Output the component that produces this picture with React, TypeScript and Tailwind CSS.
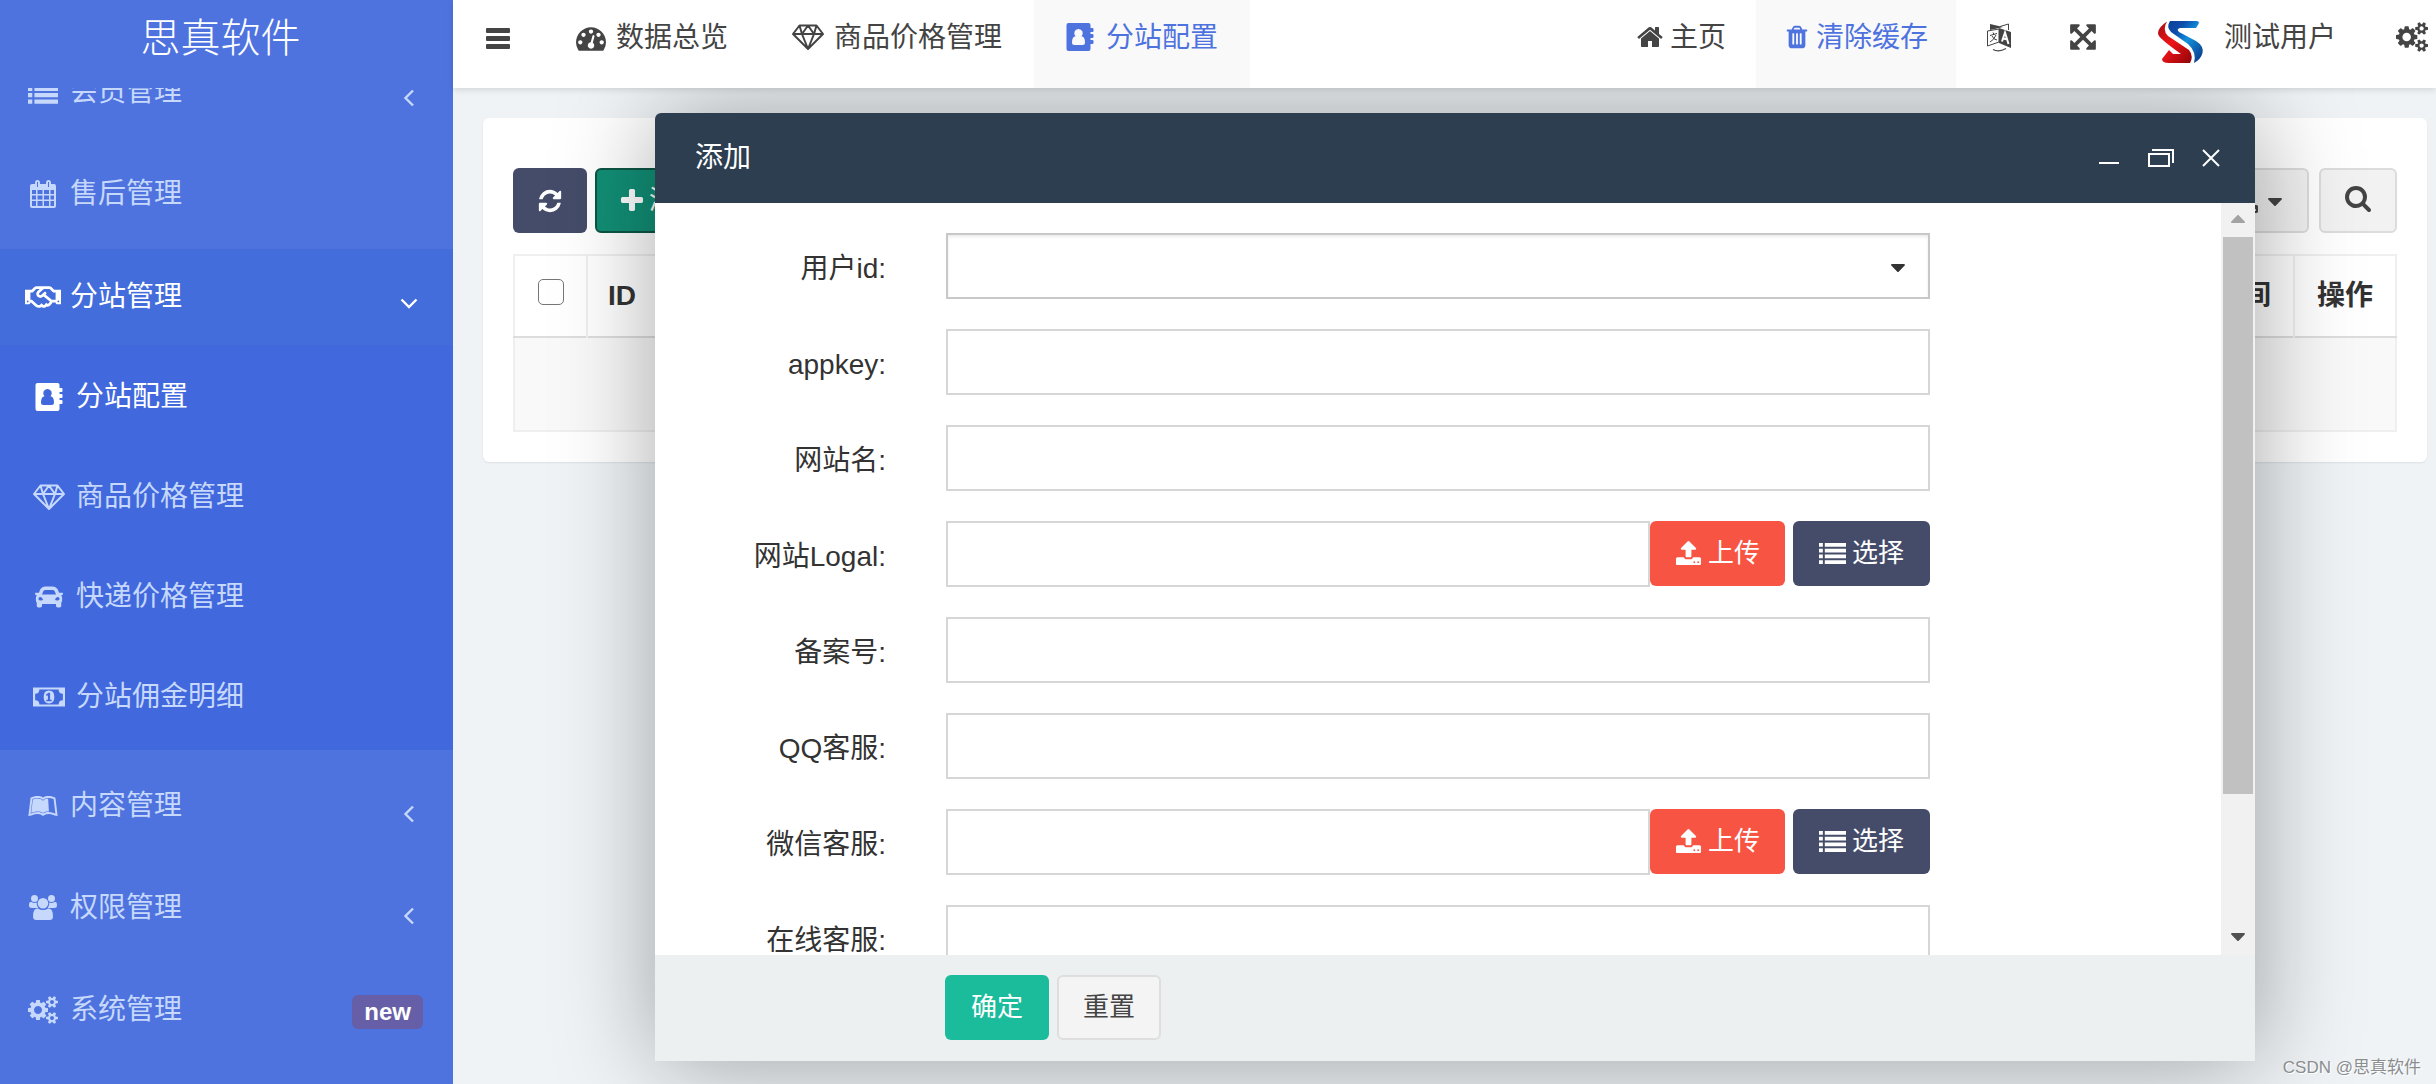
import React from 'react';
import { FaCar, FaCaretDown, FaLeanpub, FaRegHandshake } from 'react-icons/fa';

type IconProps = { className?: string };

const glyph = (d: string, viewBox = '0 0 1792 1792') => {
  const Glyph: React.FC<IconProps> = ({ className }) => (
    <svg viewBox={viewBox} className={className} fill="currentColor" fillRule="evenodd" aria-hidden="true">
      <path d={d} />
    </svg>
  );
  return Glyph;
};

const Tachometer = glyph('M384 1152q0-53-37.5-90.5t-90.5-37.5-90.5 37.5-37.5 90.5 37.5 90.5 90.5 37.5 90.5-37.5 37.5-90.5zm192-448q0-53-37.5-90.5t-90.5-37.5-90.5 37.5-37.5 90.5 37.5 90.5 90.5 37.5 90.5-37.5 37.5-90.5zm428 481l101-382q6-26-7.5-48.5t-38.5-29.5-48 6.5-30 39.5l-101 382q-60 5-107 43.5t-63 98.5q-20 77 20 146t117 89 146-20 89-117q16-60-6-117t-72-91zm660-33q0-53-37.5-90.5t-90.5-37.5-90.5 37.5-37.5 90.5 37.5 90.5 90.5 37.5 90.5-37.5 37.5-90.5zm-640-640q0-53-37.5-90.5t-90.5-37.5-90.5 37.5-37.5 90.5 37.5 90.5 90.5 37.5 90.5-37.5 37.5-90.5zm448 192q0-53-37.5-90.5t-90.5-37.5-90.5 37.5-37.5 90.5 37.5 90.5 90.5 37.5 90.5-37.5 37.5-90.5zm320 448q0 261-141 483-19 29-54 29h-1402q-35 0-54-29-141-221-141-483 0-182 71-348t191-286 286-191 348-71 348 71 286 191 191 286 71 348z');
const Home = glyph('M1472 992v480q0 26-19 45t-45 19h-384v-384h-256v384h-384q-26 0-45-19t-19-45v-480q0-1 .5-3t.5-3l575-474 575 474q1 2 1 6zm223-69l-62 74q-8 9-21 11h-3q-13 0-21-7l-692-577-692 577q-12 8-24 7-13-2-21-11l-62-74q-8-10-7-23.5t11-21.5l719-599q32-26 76-26t76 26l244 204v-195q0-14 9-23t23-9h192q14 0 23 9t9 23v408l219 182q10 8 11 21.5t-7 23.5z');
const Trash = glyph('M704 1376v-704q0-14-9-23t-23-9h-64q-14 0-23 9t-9 23v704q0 14 9 23t23 9h64q14 0 23-9t9-23zm256 0v-704q0-14-9-23t-23-9h-64q-14 0-23 9t-9 23v704q0 14 9 23t23 9h64q14 0 23-9t9-23zm256 0v-704q0-14-9-23t-23-9h-64q-14 0-23 9t-9 23v704q0 14 9 23t23 9h64q14 0 23-9t9-23zm-544-992h448l-48-117q-7-9-17-11h-317q-10 2-17 11zm928 32v64q0 14-9 23t-23 9h-96v948q0 83-47 143.5t-113 60.5h-832q-66 0-113-58.5t-47-141.5v-952h-96q-14 0-23-9t-9-23v-64q0-14 9-23t23-9h309l70-167q15-37 54-63t79-26h320q40 0 79 26t54 63l70 167h309q14 0 23 9t9 23z');
const Search = glyph('M1216 832q0-185-131.5-316.5t-316.5-131.5-316.5 131.5-131.5 316.5 131.5 316.5 316.5 131.5 316.5-131.5 131.5-316.5zm512 832q0 52-38 90t-90 38q-54 0-90-38l-343-342q-179 124-399 124-143 0-273.5-55.5t-225-150-150-225-55.5-273.5 55.5-273.5 150-225 225-150 273.5-55.5 273.5 55.5 225 150 150 225 55.5 273.5q0 220-124 399l343 343q37 37 37 90z');
const Plus = glyph('M1600 736v192q0 40-28 68t-68 28h-416v416q0 40-28 68t-68 28h-192q-40 0-68-28t-28-68v-416h-416q-40 0-68-28t-28-68v-192q0-40 28-68t68-28h416v-416q0-40 28-68t68-28h192q40 0 68 28t28 68v416h416q40 0 68 28t28 68z', '192 0 1408 1792');
const Refresh = glyph('M1639 1056q0 5-1 7-64 268-268 434.5t-478 166.5q-146 0-282.5-55t-243.5-157l-129 129q-19 19-45 19t-45-19-19-45v-448q0-26 19-45t45-19h448q26 0 45 19t19 45-19 45l-137 137q71 66 161 102t187 36q134 0 250-65t186-179q11-17 53-117 8-23 30-23h192q13 0 22.5 9.5t9.5 22.5zm25-800v448q0 26-19 45t-45 19h-448q-26 0-45-19t-19-45 19-45l138-138q-148-137-349-137-134 0-250 65t-186 179q-11 17-53 117-8 23-30 23h-199q-13 0-22.5-9.5t-9.5-22.5v-7q65-268 270-434.5t480-166.5q146 0 284 55.5t245 156.5l130-129q19-19 45-19t45 19 19 45z');
const Upload = glyph('M1344 1472q0-26-19-45t-45-19-45 19-19 45 19 45 45 19 45-19 19-45zm256 0q0-26-19-45t-45-19-45 19-19 45 19 45 45 19 45-19 19-45zm128-224v320q0 40-28 68t-68 28h-1472q-40 0-68-28t-28-68v-320q0-40 28-68t68-28h427q21 56 70.5 92t110.5 36h256q61 0 110.5-36t70.5-92h427q40 0 68 28t28 68zm-325-648q-17 40-59 40h-256v448q0 26-19 45t-45 19h-256q-26 0-45-19t-19-45v-448h-256q-42 0-59-40-17-39 14-69l448-448q18-19 45-19t45 19l448 448q31 30 14 69z');
const Cogs = glyph('M896 896q0-106-75-181t-181-75-181 75-75 181 75 181 181 75 181-75 75-181zm768 512q0-52-38-90t-90-38-90 38-38 90q0 53 37.5 90.5t90.5 37.5 90.5-37.5 37.5-90.5zm0-1024q0-52-38-90t-90-38-90 38-38 90q0 53 37.5 90.5t90.5 37.5 90.5-37.5 37.5-90.5zm-384 421v185q0 10-7 19.5t-16 10.5l-155 24q-11 35-32 76 34 48 90 115 7 11 7 20 0 12-7 19-23 30-82.5 89.5t-78.5 59.5q-11 0-21-7l-115-90q-37 19-77 31-11 108-23 155-7 24-30 24h-186q-11 0-20-7.5t-10-17.5l-23-153q-34-10-75-31l-118 89q-7 7-20 7-11 0-21-8-144-133-144-160 0-9 7-19 10-14 41-53t47-61q-23-44-35-82l-152-24q-10-1-17-9.5t-7-19.5v-185q0-10 7-19.5t16-10.5l155-24q11-35 32-76-34-48-90-115-7-11-7-20 0-12 7-20 22-30 82-89t79-59q11 0 21 7l115 90q34-18 77-32 11-108 23-154 7-24 30-24h186q11 0 20 7.5t10 17.5l23 153q34 10 75 31l118-89q8-7 20-7 11 0 21 8 144 133 144 160 0 8-7 19-12 16-42 54t-45 60q23 48 34 82l152 23q10 2 17 10.5t7 19.5zm640 533v140q0 16-149 31-12 27-30 52 51 113 51 138 0 4-4 7-122 71-124 71-8 0-46-47t-52-68q-20 2-30 2t-30-2q-14 21-52 68t-46 47q-2 0-124-71-4-3-4-7 0-25 51-138-18-25-30-52-149-15-149-31v-140q0-16 149-31 13-29 30-52-51-113-51-138 0-4 4-7 4-2 35-20t59-34 30-16q8 0 46 46.5t52 67.5q20-2 30-2t30 2q51-71 92-112l6-2q4 0 124 70 4 3 4 7 0 25-51 138 17 23 30 52 149 15 149 31zm0-1024v140q0 16-149 31-12 27-30 52 51 113 51 138 0 4-4 7-122 71-124 71-8 0-46-47t-52-68q-20 2-30 2t-30-2q-14 21-52 68t-46 47q-2 0-124-71-4-3-4-7 0-25 51-138-18-25-30-52-149-15-149-31v-140q0-16 149-31 13-29 30-52-51-113-51-138 0-4 4-7 4-2 35-20t59-34 30-16q8 0 46 46.5t52 67.5q20-2 30-2t30 2q51-71 92-112l6-2q4 0 124 70 4 3 4 7 0 25-51 138 17 23 30 52 149 15 149 31z', '0 0 1920 1792');
const Expand = glyph('M1411 541l-355 355 355 355 144-144q29-31 70-14 39 17 39 59v448q0 26-19 45t-45 19h-448q-42 0-59-40-17-39 14-69l144-144-355-355-355 355 144 144q31 30 14 69-17 40-59 40h-448q-26 0-45-19t-19-45v-448q0-42 40-59 39-17 69 14l144 144 355-355-355-355-144 144q-19 19-45 19-12 0-24-5-40-17-40-59v-448q0-26 19-45t45-19h448q42 0 59 40 17 39-14 69l-144 144 355 355 355-355-144-144q-31-30-14-69 17-40 59-40h448q26 0 45 19t19 45v448q0 42-39 59-13 5-25 5-26 0-45-19z');
const Bars = glyph('M1 2h22q1 0 1 1v3q0 1-1 1h-22q-1 0-1-1v-3q0-1 1-1zM1 10h22q1 0 1 1v3q0 1-1 1h-22q-1 0-1-1v-3q0-1 1-1zM1 18h22q1 0 1 1v3q0 1-1 1h-22q-1 0-1-1v-3q0-1 1-1z', '0 0 24 24');
const List = glyph('M0 2h4v4H0zM0 8h4v4H0zM0 14h4v4H0zM0 20h4v4H0zM6 2h22v4H6zM6 8h22v4H6zM6 14h22v4H6zM6 20h22v4H6z', '0 0 28 26');
const Users = glyph('M5.500 1a3.500 3.500 0 1 1 0 7 3.500 3.500 0 0 1 0-7zM22.500 1a3.500 3.500 0 1 1 0 7 3.500 3.500 0 0 1 0-7zM14 4a5.300 5.300 0 1 1 0 10.600 5.300 5.300 0 0 1 0-10.600zM2.500 8Q4 9 5.500 9q1.200 0 2.200-.4-.3 3.200 1.500 5.400H3q-3 0-3-2.500Q0 8 1.500 8zM25.500 8Q24 9 22.500 9q-1.200 0-2.200-.4.3 3.200-1.500 5.400H25q3 0 3-2.500Q28 8 26.500 8zM9 14.500Q11 16 14 16t5-1.500Q24 14 24 22.500 24 26 20.500 26h-13Q4 26 4 22.500 4 14 9 14.500z', '0 0 28 28');
const Calendar = glyph('M2 4h3V3q0-3 2.500-3T10 3v1h6V3q0-3 2.500-3T21 3v1h3q2 0 2 2v20q0 2-2 2H2q-2 0-2-2V6q0-2 2-2zM2 10v4h4v-4zM7.500 10v4h5v-4zM14 10v4h5v-4zM20.500 10v4H24v-4zM2 15.500v4h4v-4zM7.500 15.500v4h5v-4zM14 15.500v4h5v-4zM20.500 15.500v4H24v-4zM2 21v5h4v-5zM7.500 21v5h5v-5zM14 21v5h5v-5zM20.500 21v5H24v-5zM7 2v5h1V2zM18 2v5h1V2z', '0 0 26 28');
const Money = glyph('M0 3h30v18H0zM6 5Q6 9 2 9v6q4 0 4 4h18q0-4 4-4V9q-4 0-4-4zM15 6q5 0 5 6t-5 6-5-6 5-6zM14.500 8L12 10l1 1 1-.6V14.500h-1.500V16h5v-1.500H16V8z', '0 0 30 24');
const AddressBook = glyph('M2 0h20q2 0 2 2v3h2q1 0 1 1v2q0 1-1 1h-2v2h2q1 0 1 1v2q0 1-1 1h-2v2h2q1 0 1 1v2q0 1-1 1h-2v5q0 2-2 2H2q-2 0-2-2V2q0-2 2-2zM12 6a4.200 4.200 0 0 0-3 7.200q-3.500.5-3.500 6.300 0 2.500 2.500 2.500h8q2.500 0 2.500-2.500 0-5.800-3.500-6.300A4.200 4.200 0 0 0 12 6z', '0 0 27 28');

const Diamond: React.FC<IconProps> = ({ className }) => (
  <svg viewBox="0 0 32 28" className={className} fill="none" stroke="currentColor" strokeWidth="2" strokeLinejoin="round" aria-hidden="true">
    <path d="M7.500 2.500h17L31 11 16 26 1 11zM1 11h30M7.500 2.500L10 11l6 15 6-15 2.500-8.500M10 11l6-8.500L22 11" />
  </svg>
);

const AngleLeft: React.FC<IconProps> = ({ className }) => (
  <svg viewBox="0 0 16 20" className={className} fill="none" stroke="currentColor" strokeWidth="2.400" aria-hidden="true">
    <path d="M12 2.500L4.500 10l7.500 7.500" />
  </svg>
);

const AngleDown: React.FC<IconProps> = ({ className }) => (
  <svg viewBox="0 0 20 16" className={className} fill="none" stroke="currentColor" strokeWidth="2.400" aria-hidden="true">
    <path d="M2.500 4.500L10 12l7.500-7.500" />
  </svg>
);

const Language: React.FC<IconProps> = ({ className }) => (
  <svg viewBox="0 0 26 30" className={className} fill="none" stroke="currentColor" aria-hidden="true">
    <path d="M13 7L1.500 9v15L13 20z" />
    <path d="M14 4.500L22.500 2v6" />
    <path d="M4 2v6l9-2 4-1z" fill="currentColor" stroke="none" />
    <path d="M13 6l12 4v16l-12-5z" fill="currentColor" stroke="none" />
    <path d="M16 19.500l3-9 3.500 11.500M17 16.500l4.500 1" stroke="#fff" strokeWidth="2" />
    <path d="M4 13.500l7-2M7 10.500l1 2M10 13q-2 5-6 7M6 14q2 4 5 4" />
    <path d="M7 27.500q6 3 13-1" strokeWidth="1.200" />
  </svg>
);

const UserLogo: React.FC<IconProps> = ({ className }) => (
  <svg viewBox="0 0 46 44" className={className} aria-hidden="true">
    <defs>
      <linearGradient id="ribbonBlue" x1="0" y1="0" x2="1" y2="1">
        <stop offset="0" stopColor="#0b3f97" />
        <stop offset=".25" stopColor="#0d4dab" />
        <stop offset=".5" stopColor="#1290dc" />
        <stop offset="1" stopColor="#0a2f80" />
      </linearGradient>
      <linearGradient id="ribbonRed" x1="0" y1="0" x2="1" y2="1">
        <stop offset="0" stopColor="#a50d12" />
        <stop offset=".45" stopColor="#ee1418" />
        <stop offset="1" stopColor="#8e0509" />
      </linearGradient>
    </defs>
    <path d="M12 1h26q4 0 2.500 3L38 8H22q-4 1-1 4l17 9q8 5 6.500 12Q43 39 36 43q3-11-6-19L13 12Q8 7 12 1z" fill="url(#ribbonBlue)" />
    <path d="M9 1.500Q-2 9 .500 15 2 19 23 34h-8l-4-4-7 9q0 4 7 4h21q4-7-1-13L10 16Q4 10 9 1.500z" fill="url(#ribbonRed)" />
  </svg>
);

const subItems = [
  { label: '分站配置', Icon: AddressBook, active: true },
  { label: '商品价格管理', Icon: Diamond },
  { label: '快递价格管理', Icon: FaCar },
  { label: '分站佣金明细', Icon: Money },
];

const fields = [
  { id: 'user_id', label: '用户id:', kind: 'select' },
  { id: 'appkey', label: 'appkey:', kind: 'text' },
  { id: 'site_name', label: '网站名:', kind: 'text' },
  { id: 'site_logo', label: '网站Logal:', kind: 'upload' },
  { id: 'icp', label: '备案号:', kind: 'text' },
  { id: 'qq', label: 'QQ客服:', kind: 'text' },
  { id: 'wechat', label: '微信客服:', kind: 'upload' },
  { id: 'online', label: '在线客服:', kind: 'text' },
];

type MenuRowProps = {
  label: string;
  Icon: React.ComponentType<IconProps>;
  active?: boolean;
  children?: React.ReactNode;
};

const MenuRow: React.FC<MenuRowProps> = ({ label, Icon, active, children }) => (
  <a
    href="#"
    className={`flex h-24 items-center pl-6 pr-[30px] ${active ? 'bg-[#446ddc] text-white' : 'text-[#c6d8fb]'}`}
  >
    <span className="flex w-[38px] justify-center">
      <Icon className={active ? 'h-8 w-9' : 'h-7 w-[30px]'} />
    </span>
    <span className="ml-2 flex-1">{label}</span>
    {children}
  </a>
);

const Sidebar: React.FC = () => (
  <aside className="flex w-[453px] shrink-0 flex-col bg-[#4e73df] text-[28px]">
    <div className="flex h-[88px] shrink-0 justify-center pt-2 pr-3 text-[40px] leading-[60px] font-light text-white">思真软件</div>
    <nav className="min-h-0 flex-1 overflow-hidden">
      <ul className="-mt-11 flex flex-col gap-1.5">
        <li>
          <MenuRow label="会员管理" Icon={List}>
            <AngleLeft className="mt-3 mr-1.5 h-5 w-4" />
          </MenuRow>
        </li>
        <li>
          <MenuRow label="售后管理" Icon={Calendar} />
        </li>
        <li className="mt-px mb-0.5">
          <MenuRow label="分站管理" Icon={FaRegHandshake} active>
            <AngleDown className="mt-3 mr-1 h-4 w-5" />
          </MenuRow>
          <ul className="bg-[#4169dd] pt-0.5 pb-[3px]">
            {subItems.map(({ label, Icon, active }) => (
              <li key={label}>
                <a href="#" className={`flex h-[100px] items-center pl-[30px] ${active ? 'text-white' : 'text-[#c6d8fb]'}`}>
                  <span className="flex w-[38px] justify-center">
                    <Icon className="h-7 w-8" />
                  </span>
                  <span className="ml-2">{label}</span>
                </a>
              </li>
            ))}
          </ul>
        </li>
        <li>
          <MenuRow label="内容管理" Icon={FaLeanpub}>
            <AngleLeft className="mt-4 mr-1.5 h-5 w-4" />
          </MenuRow>
        </li>
        <li>
          <MenuRow label="权限管理" Icon={Users}>
            <AngleLeft className="mt-4 mr-1.5 h-5 w-4" />
          </MenuRow>
        </li>
        <li>
          <MenuRow label="系统管理" Icon={Cogs}>
            <span className="mt-1 rounded-md bg-[#665fa8] px-3 text-2xl leading-[34px] font-bold text-white">new</span>
          </MenuRow>
        </li>
      </ul>
    </nav>
  </aside>
);

const TopBar: React.FC = () => (
  <header className="relative z-10 flex h-[88px] shrink-0 justify-between bg-white pl-[33px] leading-[76px] text-[#444] shadow-[0_2px_6px_rgba(0,0,0,0.12)]">
    <div className="flex whitespace-nowrap">
      <button type="button" aria-label="菜单" className="flex h-[76px] items-center">
        <Bars className="size-6" />
      </button>
      <a href="#" className="flex items-start gap-2.5 pr-8 pl-[66px]">
        <Tachometer className="mt-[23px] size-[30px]" />
        数据总览
      </a>
      <a href="#" className="flex items-start gap-2.5 px-8">
        <Diamond className="mt-[23px] h-7 w-8" />
        商品价格管理
      </a>
      <a href="#" className="flex items-start gap-3 bg-[#f9f9f9] px-8 text-[#4e73df]">
        <AddressBook className="mt-[23px] size-7" />
        分站配置
      </a>
    </div>
    <div className="flex whitespace-nowrap">
      <a href="#" className="flex gap-1.5 px-[30px]">
        <Home className="mt-[23px] size-7" />
        主页
      </a>
      <a href="#" className="flex gap-1.5 bg-[#f9f9f9] px-7 text-[#4e73df]">
        <Trash className="mt-6 size-[26px]" />
        清除缓存
      </a>
      <button type="button" aria-label="语言" className="flex px-[30px] pt-[22px]">
        <Language className="h-[30px] w-[26px]" />
      </button>
      <button type="button" aria-label="全屏" className="flex px-[26px] pt-[22px]">
        <Expand className="size-[30px]" />
      </button>
      <a href="#" className="flex gap-5 pr-[30px] pl-[34px]">
        <UserLogo className="mt-5 h-11 w-[46px]" />
        测试用户
      </a>
      <button type="button" aria-label="设置" className="flex pt-[22px] pr-2 pl-[30px]">
        <Cogs className="h-[30px] w-8" />
      </button>
    </div>
  </header>
);

const ListCard: React.FC = () => (
  <section className="mt-[30px] mr-[9px] ml-[30px] rounded-md bg-white px-[30px] pt-[50px] pb-[30px] shadow-[0_1px_2px_rgba(0,0,0,0.08)]">
    <div className="flex justify-between">
      <div className="flex gap-2">
        <button type="button" aria-label="刷新" className="flex h-[65px] w-[74px] items-center justify-center rounded-md bg-[#444c69] text-white">
          <Refresh className="size-[26px]" />
        </button>
        <button type="button" className="flex h-[65px] items-center gap-1.5 rounded-md border-2 border-[#0d5543] bg-[#128f76] px-6 text-[26px] text-white">
          <Plus className="h-7 w-[22px]" />
          添加
        </button>
      </div>
      <div className="flex gap-2.5">
        <button type="button" aria-label="导出" className="flex h-[65px] w-[110px] items-center justify-end gap-1 rounded-md border-2 border-[#dcdcdc] bg-[#f2f2f2] pr-5 text-[#444]">
          <Upload className="size-7" />
          <FaCaretDown className="size-6" />
        </button>
        <button type="button" aria-label="搜索" className="flex h-[65px] w-[78px] items-center justify-center rounded-md border-2 border-[#dcdcdc] bg-[#f2f2f2] pb-1.5 text-[#444]">
          <Search className="size-7" />
        </button>
      </div>
    </div>
    <table className="mt-[21px] w-full border-collapse text-[28px] text-[#333]">
      <thead>
        <tr className="h-[82px] border-2 border-[#efefef] border-b-[#ddd]">
          <th className="w-[73px] border-r-2 border-[#efefef]">
            <input type="checkbox" aria-label="全选" className="mt-1 size-[26px] appearance-none rounded-[5px] border border-[#767676] bg-white" />
          </th>
          <th className="border-r-2 border-[#efefef] pl-5 text-left">ID</th>
          <th className="border-r-2 border-[#efefef] pr-[22px] text-right">创建时间</th>
          <th className="w-[102px]">操作</th>
        </tr>
      </thead>
      <tbody>
        <tr className="h-[94px] border-2 border-[#efefef] bg-[#f9f9f9]">
          <td colSpan={4} />
        </tr>
      </tbody>
    </table>
  </section>
);

const inputClass = 'h-[66px] w-full min-w-0 border-2 border-[#d6d6d6] bg-white px-4';

const Field: React.FC<{ id: string; label: string; kind: string }> = ({ id, label, kind }) => (
  <div className="grid grid-cols-[231px_1fr_231px] gap-x-[60px]">
    <label htmlFor={id} className="pt-1.5 text-right leading-[60px]">{label}</label>
    {kind === 'select' && (
      <div className="relative">
        <select id={id} className="h-[66px] w-full appearance-none border-2 border-[#c8c8c8] bg-white px-4 shadow-[inset_0_2px_3px_rgba(0,0,0,0.08)]" />
        <FaCaretDown className="pointer-events-none absolute top-[22px] right-5 size-6" />
      </div>
    )}
    {kind === 'text' && <input id={id} type="text" className={inputClass} />}
    {kind === 'upload' && (
      <div className="flex text-[26px] whitespace-nowrap text-white">
        <input id={id} type="text" className={inputClass} />
        <button type="button" className="flex h-[65px] shrink-0 items-center gap-1.5 rounded-md bg-[#f75444] px-[25px]">
          <Upload className="size-[27px]" />
          上传
        </button>
        <button type="button" className="ml-2 flex h-[65px] shrink-0 items-center gap-1.5 rounded-md bg-[#444c69] px-[26px]">
          <List className="size-[27px]" />
          选择
        </button>
      </div>
    )}
  </div>
);

const AddDialog: React.FC = () => (
  <div
    role="dialog"
    aria-labelledby="dialog-title"
    className="absolute top-[25px] right-[181px] bottom-[23px] left-[202px] flex flex-col rounded-t-md bg-white text-[28px] text-[#333] shadow-[2px_2px_100px_rgba(0,0,0,0.35)]"
  >
    <div className="flex h-[90px] shrink-0 items-center justify-between rounded-t-md bg-[#2c3e50] pr-[35px] pl-10 text-white">
      <h2 id="dialog-title">添加</h2>
      <div className="flex items-center gap-7">
        <button type="button" aria-label="最小化">
          <svg viewBox="0 0 22 20" className="h-5 w-[22px]" stroke="currentColor" strokeWidth="2"><path d="M1 15h20" /></svg>
        </button>
        <button type="button" aria-label="还原">
          <svg viewBox="0 0 26 20" className="h-5 w-[26px]" fill="none" stroke="currentColor" strokeWidth="2"><path d="M1 6h20v12H1zM4 2h21v13" /></svg>
        </button>
        <button type="button" aria-label="关闭">
          <svg viewBox="0 0 18 18" className="size-[18px]" stroke="currentColor" strokeWidth="2"><path d="M1 1l16 16M17 1L1 17" /></svg>
        </button>
      </div>
    </div>
    <div className="flex min-h-0 flex-1">
      <form className="flex flex-1 flex-col gap-[30px] overflow-hidden pt-[30px]">
        {fields.map((field) => (
          <Field key={field.id} {...field} />
        ))}
      </form>
      <div className="flex w-[34px] flex-col items-center bg-[#f1f1f1]">
        <FaCaretDown className="my-[5px] size-6 rotate-180 text-[#a3a3a3]" />
        <div className="h-[557px] w-[30px] bg-[#c1c1c1]" />
        <FaCaretDown className="mt-auto mb-[7px] size-6 text-[#505050]" />
      </div>
    </div>
    <div className="flex h-[106px] shrink-0 items-start gap-2 bg-[#ecf0f1] pt-5 pl-[290px] text-[26px]">
      <button type="submit" className="h-[65px] w-[104px] rounded-md bg-[#1abc9c] text-white">确定</button>
      <button type="reset" className="h-[65px] w-[104px] rounded-md border-2 border-[#dedede] bg-[#f4f4f4] text-[#444]">重置</button>
    </div>
  </div>
);

const App: React.FC = () => (
  <div className="flex h-screen overflow-hidden bg-[#eff3f6] font-['Liberation_Sans','Noto_Sans_CJK_SC',sans-serif] text-[28px]">
    <Sidebar />
    <div className="flex min-w-0 flex-1 flex-col">
      <TopBar />
      <main className="relative min-h-0 flex-1 overflow-hidden">
        <ListCard />
        <AddDialog />
        <span className="absolute right-[15px] bottom-1 text-[17px] text-[#8b8d8f] [text-shadow:1px_1px_0_#fff]">CSDN @思真软件</span>
      </main>
    </div>
  </div>
);

export default App;
